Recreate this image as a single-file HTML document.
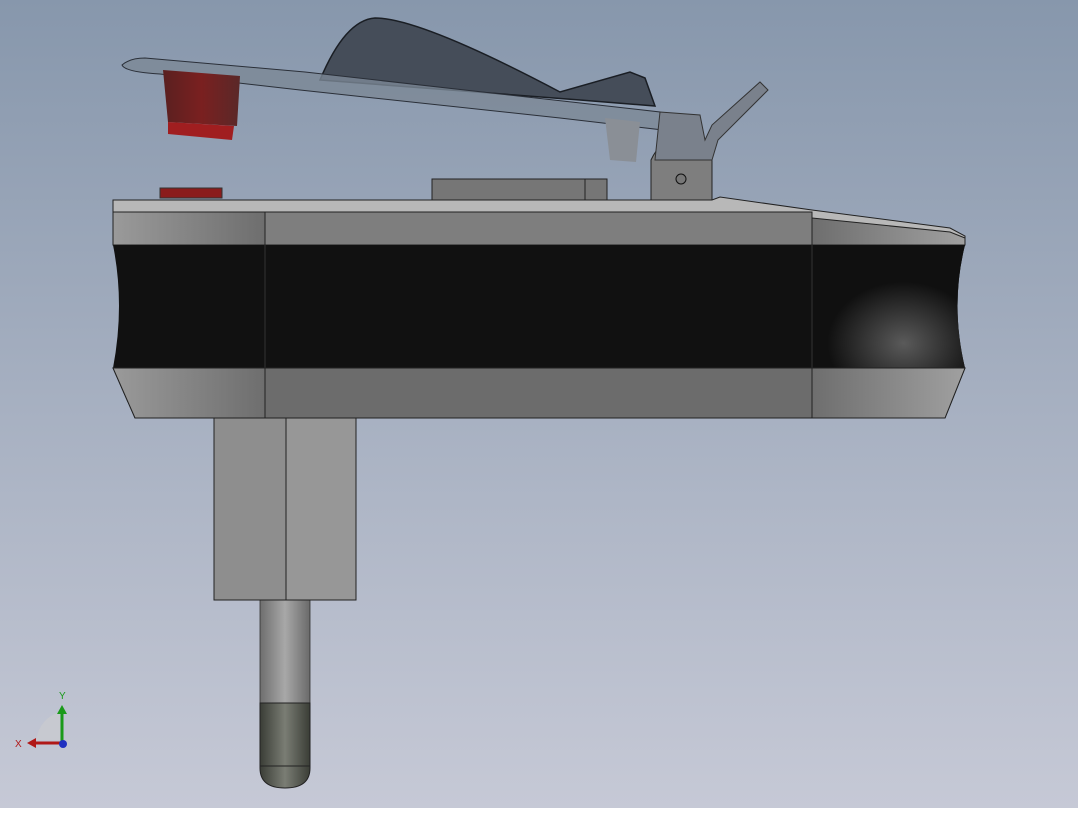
<!DOCTYPE html>
<html><head><style>body{margin:0;width:1078px;height:808px;overflow:hidden}</style></head><body>
<svg width="1078" height="808" viewBox="0 0 1078 808" xmlns="http://www.w3.org/2000/svg">
<defs>
<linearGradient id="bg" x1="0" y1="0" x2="0" y2="1"><stop offset="0" stop-color="#8797ac"/><stop offset="1" stop-color="#c6c9d6"/></linearGradient>
<linearGradient id="rod" x1="0" y1="0" x2="1" y2="0"><stop offset="0" stop-color="#6e6e6e"/><stop offset="0.5" stop-color="#a8a8a8"/><stop offset="1" stop-color="#6a6a6a"/></linearGradient>
<linearGradient id="tip" x1="0" y1="0" x2="1" y2="0"><stop offset="0" stop-color="#3a3d36"/><stop offset="0.5" stop-color="#7a7d74"/><stop offset="1" stop-color="#3a3d36"/></linearGradient>
<linearGradient id="gl" x1="0" y1="0" x2="1" y2="0"><stop offset="0" stop-color="#9a9a9a"/><stop offset="1" stop-color="#6e6e6e"/></linearGradient>
<linearGradient id="gr" x1="0" y1="0" x2="1" y2="0"><stop offset="0" stop-color="#6e6e6e"/><stop offset="1" stop-color="#a0a0a0"/></linearGradient>
<radialGradient id="blk" cx="0.6" cy="0.8" r="0.5"><stop offset="0" stop-color="#5a5a5a"/><stop offset="1" stop-color="#101010"/></radialGradient>
<linearGradient id="red" x1="0" y1="0" x2="1" y2="0"><stop offset="0" stop-color="#5a2020"/><stop offset="0.5" stop-color="#7a2020"/><stop offset="1" stop-color="#5a2828"/></linearGradient>
</defs>
<rect width="1078" height="808" fill="url(#bg)"/>
<!-- rod -->
<rect x="260" y="598" width="50" height="110" fill="url(#rod)" stroke="#333" stroke-width="0.8"/>
<path d="M260 703 L310 703 L310 768 Q310 788 285 788 Q260 788 260 768 Z" fill="url(#tip)" stroke="#222" stroke-width="1"/>
<line x1="260" y1="766" x2="310" y2="766" stroke="#222"/>
<!-- block -->
<rect x="214" y="418" width="72" height="182" fill="#8e8e8e" stroke="#222"/>
<rect x="286" y="418" width="70" height="182" fill="#979797" stroke="#222"/>
<!-- top items -->
<rect x="160" y="188" width="62" height="10" fill="#8a1c1c" stroke="#333"/>
<rect x="432" y="179" width="175" height="21" fill="#767676" stroke="#222"/>
<line x1="585" y1="179" x2="585" y2="200" stroke="#222"/>
<path d="M651 200 L651 160 Q660 140 680 138 Q700 140 712 160 L712 200 Z" fill="#7e7e7e" stroke="#222"/>
<circle cx="681" cy="179" r="5" fill="#777" stroke="#111"/>
<!-- body -->
<path d="M113 200 L712 200 L720 197 L812 210 L950 228 L965 236 L965 245 L113 245 Z" fill="#b8b8b8" stroke="#222"/>
<path d="M113 212 L812 212 L812 245 L113 245 Z" fill="#7e7e7e" stroke="#222"/>
<path d="M113 212 L265 212 L265 245 L113 245 Z" fill="url(#gl)" stroke="#222"/>
<path d="M812 218 L950 232 L965 238 L965 245 L812 245 Z" fill="url(#gr)" stroke="#222"/>
<path d="M113 245 L965 245 Q950 305 965 368 L113 368 Q125 305 113 245 Z" fill="#111"/>
<path d="M812 245 L965 245 Q950 305 965 368 L812 368 Z" fill="url(#blk)"/>
<line x1="265" y1="245" x2="265" y2="368" stroke="#333"/>
<line x1="812" y1="245" x2="812" y2="368" stroke="#333"/>
<path d="M113 368 L965 368 L945 418 L135 418 Z" fill="#6c6c6c" stroke="#222"/>
<path d="M113 368 L265 368 L265 418 L135 418 Z" fill="url(#gl)" stroke="#222"/>
<path d="M812 368 L965 368 L945 418 L812 418 Z" fill="url(#gr)" stroke="#222"/>
<!-- lever -->
<path d="M320 80 Q345 20 375 18 Q420 18 560 92 L630 72 L645 78 L655 106 L580 100 Z" fill="#454d59" stroke="#1a1e24" stroke-width="1.5"/>
<path d="M122 65 Q130 58 145 58 L305 72 L660 112 L663 130 L560 118 L300 90 L160 74 Q125 72 122 65 Z" fill="#7c8896" fill-opacity="0.8" stroke="#2a2f38" stroke-width="1"/>
<path d="M163 70 L240 76 L237 126 L168 122 Z" fill="url(#red)"/>
<path d="M168 122 L234 126 L232 140 L168 134 Z" fill="#a01e20"/>
<path d="M605 118 L640 122 L636 162 L610 160 Z" fill="#8a8f96"/>
<path d="M660 112 L700 115 L705 140 L712 125 L760 82 L768 90 L718 140 L712 160 L655 160 Z" fill="#7a818c" stroke="#333"/>
<!-- axes -->
<path d="M36 740 Q40 718 60 712 L60 740 Z" fill="#c7c9d0"/>
<line x1="62" y1="742" x2="62" y2="712" stroke="#1a9a1a" stroke-width="3"/>
<path d="M57 714 L62 705 L67 714 Z" fill="#1a9a1a"/>
<line x1="62" y1="743" x2="34" y2="743" stroke="#b01818" stroke-width="3"/>
<path d="M36 738 L27 743 L36 748 Z" fill="#b01818"/>
<circle cx="63" cy="744" r="4" fill="#2030c0"/>
<text x="59" y="699" font-family="Liberation Sans, sans-serif" font-size="10" fill="#1a9a1a">Y</text>
<text x="15" y="747" font-family="Liberation Sans, sans-serif" font-size="10" fill="#b01818">X</text>
</svg>
</body></html>
